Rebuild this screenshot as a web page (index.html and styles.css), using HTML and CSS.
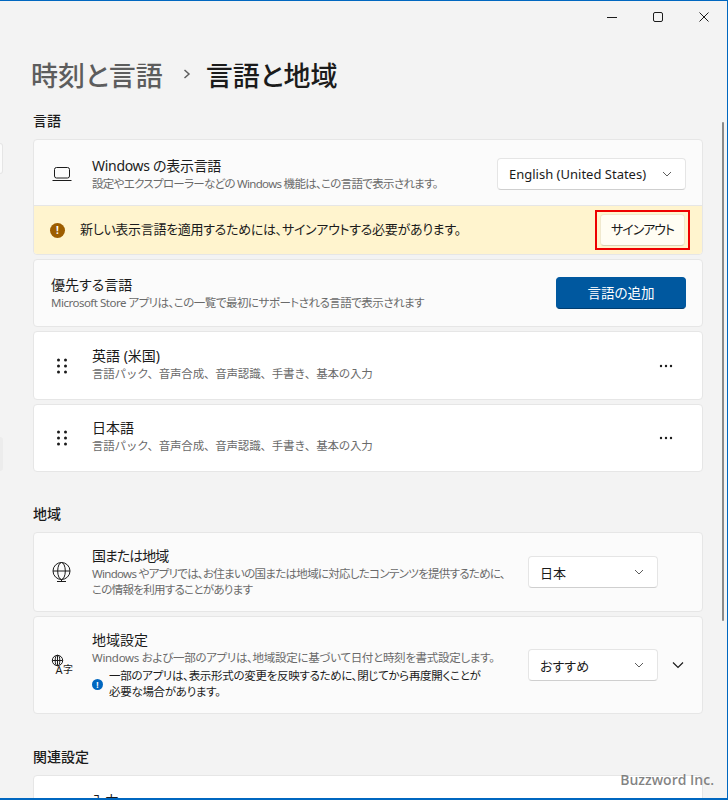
FILE: index.html
```html
<!DOCTYPE html>
<html lang="ja">
<head>
  <meta charset="UTF-8" />
  <meta name="viewport" content="width=device-width, initial-scale=1.0"/>
  <title>言語と地域</title>
  <link rel="stylesheet" href="styles.css">
</head>
<body>
  <div class="window">
    <div class="titlebar">
      <svg class="caption-btn" width="12" height="12" viewBox="0 0 12 12"><path d="M1 6.500h10" /></svg>
      <svg class="caption-btn" width="12" height="12" viewBox="0 0 12 12"><rect x="1.500" y="1.500" width="9" height="9" rx="1.500" /></svg>
      <svg class="caption-btn" width="12" height="12" viewBox="0 0 12 12"><path d="M1.500 1.500l9 9M10.500 1.500l-9 9" /></svg>
    </div>

    <div class="nav-sliver nav-sliver-top"></div>
    <div class="nav-sliver nav-sliver-mid"></div>
    <div class="scrollbar"></div>

    <main class="content">
      <h1 class="breadcrumb">
        <span class="crumb-parent">時刻と言語</span>
        <svg class="crumb-sep" width="10" height="12" viewBox="0 0 10 12"><path d="M2.500 2l4.500 4-4.500 4" /></svg>
        <span>言語と地域</span>
      </h1>

      <h2 class="section-label first">言語</h2>

      <div class="card group">
        <div class="row row-display">
          <svg class="row-icon" width="20" height="20" viewBox="0 0 20 20">
            <rect x="2.500" y="3.500" width="15" height="10.500" rx="2" />
            <path d="M0.500 16.500h19" />
          </svg>
          <div class="row-text">
            <div class="row-title title-tight">Windows の表示言語</div>
            <div class="row-desc desc-squeeze">設定やエクスプローラーなどの Windows 機能は、この言語で表示されます。</div>
          </div>
          <div class="select select-wide">
            <span>English (United States)</span>
            <svg class="chev" width="10" height="6" viewBox="0 0 10 6"><path d="M1 1l4 4 4-4" /></svg>
          </div>
        </div>
        <div class="notice">
          <span class="badge badge-warn">!</span>
          <span class="notice-text">新しい表示言語を適用するためには、サインアウトする必要があります。</span>
          <div class="callout">
            <button class="btn btn-signout">サインアウト</button>
          </div>
        </div>
      </div>

      <div class="card row row-preferred">
        <div class="row-text">
          <div class="row-title">優先する言語</div>
          <div class="row-desc desc-squeeze-sm">Microsoft Store アプリは、この一覧で最初にサポートされる言語で表示されます</div>
        </div>
        <button class="btn btn-primary">言語の追加</button>
      </div>

      <div class="card card-white row row-lang">
        <svg class="grip" width="10" height="16" viewBox="0 0 10 16">
          <circle cx="1.500" cy="2" r="1.500" /><circle cx="8.500" cy="2" r="1.500" />
          <circle cx="1.500" cy="8" r="1.500" /><circle cx="8.500" cy="8" r="1.500" />
          <circle cx="1.500" cy="14" r="1.500" /><circle cx="8.500" cy="14" r="1.500" />
        </svg>
        <div class="row-text">
          <div class="row-title">英語 (米国)</div>
          <div class="row-desc desc-list">言語パック、音声合成、音声認識、手書き、基本の入力</div>
        </div>
        <svg class="more" width="14" height="4" viewBox="0 0 14 4">
          <circle cx="2" cy="2" r="1.200" /><circle cx="7" cy="2" r="1.200" /><circle cx="12" cy="2" r="1.200" />
        </svg>
      </div>

      <div class="card card-white row row-lang">
        <svg class="grip" width="10" height="16" viewBox="0 0 10 16">
          <circle cx="1.500" cy="2" r="1.500" /><circle cx="8.500" cy="2" r="1.500" />
          <circle cx="1.500" cy="8" r="1.500" /><circle cx="8.500" cy="8" r="1.500" />
          <circle cx="1.500" cy="14" r="1.500" /><circle cx="8.500" cy="14" r="1.500" />
        </svg>
        <div class="row-text">
          <div class="row-title">日本語</div>
          <div class="row-desc desc-list">言語パック、音声合成、音声認識、手書き、基本の入力</div>
        </div>
        <svg class="more" width="14" height="4" viewBox="0 0 14 4">
          <circle cx="2" cy="2" r="1.200" /><circle cx="7" cy="2" r="1.200" /><circle cx="12" cy="2" r="1.200" />
        </svg>
      </div>

      <h2 class="section-label">地域</h2>

      <div class="card row row-country">
        <svg class="row-icon" width="20" height="20" viewBox="0 0 20 20">
          <circle cx="9.500" cy="9" r="8.500" />
          <ellipse cx="9.500" cy="9" rx="3.800" ry="8.500" />
          <path d="M1 9h17M9.500 17.500v2M5 19.500h9" />
        </svg>
        <div class="row-text">
          <div class="row-title title-tighter">国または地域</div>
          <div class="row-desc desc-squeeze nowrap">Windows やアプリでは、お住まいの国または地域に対応したコンテンツを提供するために、<br>この情報を利用することがあります</div>
        </div>
        <div class="select select-narrow">
          <span>日本</span>
          <svg class="chev" width="10" height="6" viewBox="0 0 10 6"><path d="M1 1l4 4 4-4" /></svg>
        </div>
      </div>

      <div class="card row row-format">
        <svg class="row-icon" width="20" height="20" viewBox="0 0 20 20">
          <circle cx="5.500" cy="5.500" r="5.200" />
          <ellipse cx="5.500" cy="5.500" rx="2.300" ry="5.200" />
          <path d="M0.300 5.500h10.400M5.500 0.300v10.400" />
          <text class="icon-text" x="3.500" y="18.500" font-size="11">A</text>
          <text class="icon-text" x="11" y="17.500" font-size="10">字</text>
        </svg>
        <div class="row-text">
          <div class="row-title">地域設定</div>
          <div class="row-desc desc-tight">Windows および一部のアプリは、地域設定に基づいて日付と時刻を書式設定します。</div>
          <div class="info-line">
            <span class="badge badge-info">!</span>
            <span class="info-text">一部のアプリは、表示形式の変更を反映するために、閉じてから再度開くことが<br>必要な場合があります。</span>
          </div>
        </div>
        <div class="select select-narrow">
          <span>おすすめ</span>
          <svg class="chev" width="10" height="6" viewBox="0 0 10 6"><path d="M1 1l4 4 4-4" /></svg>
        </div>
        <svg class="expand" width="12" height="8" viewBox="0 0 12 8"><path d="M1 1.500l5 5 5-5" /></svg>
      </div>

      <h2 class="section-label section-label-last">関連設定</h2>

      <div class="card card-white row row-input">
        <div class="row-text">
          <div class="row-title">入力</div>
        </div>
      </div>
    </main>

    <div class="watermark">Buzzword Inc.</div>
  </div>
</body>
</html>
```

FILE: styles.css
```css
* {
  box-sizing: border-box;
}

html, body {
  margin: 0;
  height: 100%;
}

body {
  font-family: "Noto Sans", "Noto Sans CJK JP", sans-serif;
  font-feature-settings: "palt";
  color: #1b1b1b;
  background: #f3f3f3;
  overflow: hidden;
}

.window {
  position: relative;
  height: 800px;
  overflow: hidden;
  background: #f3f3f3;
  border-top: 1px solid #0067c0;
  border-right: 1px solid #0067c0;
  border-bottom: 2px solid #0067c0;
}

.titlebar {
  display: flex;
  justify-content: flex-end;
  gap: 34px;
  height: 32px;
  padding: 10px 17px 0 0;
}

.caption-btn {
  fill: none;
  stroke: #1b1b1b;
  stroke-width: 1;
}

.nav-sliver {
  position: absolute;
  left: 0;
  width: 3px;
  background: #fbfbfb;
  border: 1px solid #e5e5e5;
  border-left: none;
  border-radius: 0 3px 3px 0;
}

.nav-sliver-top {
  top: 142px;
  height: 31px;
}

.nav-sliver-mid {
  top: 436px;
  height: 34px;
  background: #ececec;
  border: none;
}

.scrollbar {
  position: absolute;
  top: 121px;
  right: 3px;
  width: 2px;
  height: 499px;
  background: #8a8a8a;
  border-radius: 1px;
}

.content {
  width: 703px;
  padding-left: 33px;
}

.breadcrumb {
  display: flex;
  align-items: center;
  margin: 21px 0 0 -2px;
  height: 40px;
  font-size: 27px;
  font-weight: 500;
}

.crumb-parent {
  color: #5d5d5d;
}

.crumb-sep {
  margin: 0 14px 0 19px;
  fill: none;
  stroke: #5d5d5d;
  stroke-width: 1.500;
}

.section-label {
  margin: 0 0 8px;
  padding-top: 28px;
  font-size: 14px;
  line-height: 20px;
  font-weight: 500;
}

.section-label.first {
  padding-top: 17px;
}

.section-label-last {
  padding-top: 33px;
}

.card {
  margin-bottom: 4px;
  background: #fbfbfb;
  border: 1px solid #e6e6e6;
  border-radius: 4px;
}

.card-white {
  background: #fff;
}

.group {
  overflow: hidden;
}

.row {
  display: flex;
  align-items: center;
  padding: 0 16px 0 18px;
}

.row-text {
  flex: 1;
  min-width: 0;
}

.row-icon {
  flex: none;
  margin-right: 20px;
  overflow: visible;
  fill: none;
  stroke: #1b1b1b;
  stroke-width: 1;
}

.icon-text {
  fill: #1b1b1b;
  stroke: none;
}

.row-title {
  font-size: 14px;
  line-height: 20px;
}

.title-tight {
  letter-spacing: -0.3px;
}

.title-tighter {
  letter-spacing: -1px;
}

.row-desc {
  font-size: 11.5px;
  line-height: 16px;
  color: #6a6a6a;
}

.nowrap {
  white-space: nowrap;
}

.desc-tight {
  letter-spacing: -0.3px;
}

.desc-squeeze {
  letter-spacing: -0.7px;
}

.desc-squeeze-sm {
  letter-spacing: -0.5px;
}

.desc-list {
  font-feature-settings: normal;
  letter-spacing: -0.2px;
}

.row-display {
  height: 66px;
  padding-top: 3px;
  border-bottom: 1px solid #e6e6e6;
}

.row-preferred {
  height: 68px;
  padding-left: 17px;
}

.row-lang {
  height: 69px;
}

.row-lang .row-text {
  margin-bottom: 4px;
}

.row-lang + .row-lang {
  height: 68px;
}

.row-country {
  height: 80px;
  padding-right: 44px;
}

.row-format {
  height: 98px;
  margin-bottom: 0;
}

.row-input {
  height: 70px;
  align-items: flex-start;
  padding: 15px 0 0 57px;
  margin-bottom: 0;
}

.select {
  display: flex;
  align-items: center;
  justify-content: space-between;
  flex: none;
  height: 32px;
  padding: 0 13px 0 11px;
  font-size: 13px;
  background: #fff;
  border: 1px solid #e5e5e5;
  border-bottom-color: #cfcfcf;
  border-radius: 4px;
}

.select-wide {
  width: 189px;
}

.select-narrow {
  width: 130px;
  margin-left: 12px;
}

.chev {
  fill: none;
  stroke: #5d5d5d;
  stroke-width: 1;
}

.expand {
  flex: none;
  margin: 0 2px 0 14px;
  fill: none;
  stroke: #1b1b1b;
  stroke-width: 1.200;
}

.notice {
  display: flex;
  align-items: center;
  height: 48px;
  padding: 0 12px 0 16px;
  background: #fff4ce;
}

.notice-text {
  flex: 1;
  font-size: 13px;
  letter-spacing: -0.3px;
  margin: 0 0 3px 15px;
}

.callout {
  flex: none;
  padding: 2px 3px;
  border: 2px solid #ee0000;
}

.badge {
  display: flex;
  align-items: center;
  justify-content: center;
  flex: none;
  border-radius: 50%;
  color: #fff;
  font-weight: 700;
}

.badge-warn {
  width: 15px;
  height: 15px;
  font-size: 10px;
  background: #9d5d00;
}

.badge-info {
  width: 11px;
  height: 11px;
  font-size: 8px;
  background: #0067c0;
}

.btn {
  display: block;
  flex: none;
  height: 32px;
  padding: 0 0 3px;
  font-family: inherit;
  font-feature-settings: inherit;
  font-size: 13.5px;
  white-space: nowrap;
  border-radius: 4px;
}

.btn-signout {
  width: 85px;
  font-size: 13px;
  letter-spacing: -1px;
  color: #1b1b1b;
  background: #fffdf3;
  border: 1px solid #f0e9cf;
  border-bottom-color: #d9d2b8;
}

.btn-primary {
  width: 130px;
  color: #fff;
  background: #00589f;
  border: 1px solid #00589f;
  border-bottom-color: #003d70;
}

.grip {
  flex: none;
  margin: 0 25px 0 5px;
  fill: #1b1b1b;
}

.more {
  flex: none;
  margin-right: 13px;
  fill: #1b1b1b;
}

.info-line {
  display: flex;
  align-items: center;
  gap: 6px;
  margin-top: 2px;
}

.info-text {
  font-size: 11.5px;
  line-height: 16px;
  letter-spacing: -0.3px;
}

.watermark {
  position: absolute;
  right: 13px;
  bottom: 9px;
  font-family: "Open Sans", sans-serif;
  font-size: 14px;
  font-weight: 600;
  color: rgba(90, 90, 90, 0.75);
}
```
